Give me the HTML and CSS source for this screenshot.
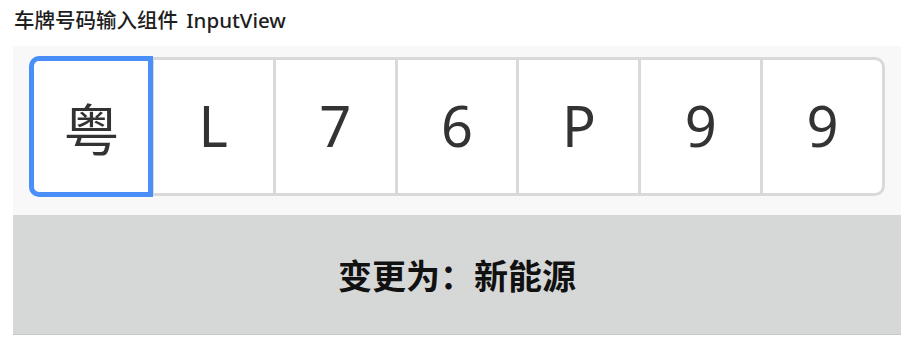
FILE: index.html
```html
<!DOCTYPE html>
<html lang="zh">
<head>
<meta charset="utf-8">
<link rel="stylesheet" href="styles.css">
</head>
<body>
<div class="title">车牌号码输入组件 InputView</div>
<div class="panel">
  <div class="plate">
    <div class="cell first active">粤</div>
    <div class="cell">L</div>
    <div class="cell">7</div>
    <div class="cell">6</div>
    <div class="cell">P</div>
    <div class="cell">9</div>
    <div class="cell last">9</div>
  </div>
</div>
<div class="switch">变更为：新能源</div>
</body>
</html>
```
FILE: styles.css
```css
html, body {
  margin: 0;
  padding: 0;
  background: #ffffff;
}
body {
  padding: 0 5px 0 13px;
  font-family: "Noto Sans", "Noto Sans CJK SC", sans-serif;
  color: #333333;
}
.title {
  height: 46px;
  padding-left: 1px;
  font-family: "Noto Sans", "Noto Sans CJK SC", sans-serif;
  font-size: 20.5px;
  font-weight: 500;
  line-height: 40px;
  word-spacing: 3px;
  color: #1e1e1e;
}
.panel {
  background: #f8f8f8;
  padding: 10px 16px 18px 16px;
}
.plate {
  display: flex;
  height: 141px;
}
.cell {
  flex: 1;
  box-sizing: border-box;
  border: 3px solid #d9d9d9;
  margin: 1px 0 1px -3px;
  background: #ffffff;
  display: flex;
  align-items: center;
  justify-content: center;
  font-size: 56px;
  color: #333333;
  padding-bottom: 4px;
  position: relative;
}
.cell.first {
  margin-left: 0;
  border-radius: 10px 0 0 10px;
  font-family: "Noto Sans CJK SC", sans-serif;
  padding-bottom: 0;
  z-index: 1;
}
.cell.active::after {
  content: "";
  position: absolute;
  top: -4px;
  bottom: -4px;
  left: -3px;
  right: -2px;
  border: 5px solid #4a8ff9;
  border-radius: 10px 0 0 10px;
}
.cell.last {
  border-radius: 0 10px 10px 0;
}
.switch {
  height: 119px;
  background: #d6d8d7;
  border-bottom: 1px solid #c6c7c7;
  display: flex;
  align-items: center;
  justify-content: center;
  font-family: "Noto Sans CJK SC", sans-serif;
  font-size: 34px;
  font-weight: 700;
  color: #111111;
}
```
